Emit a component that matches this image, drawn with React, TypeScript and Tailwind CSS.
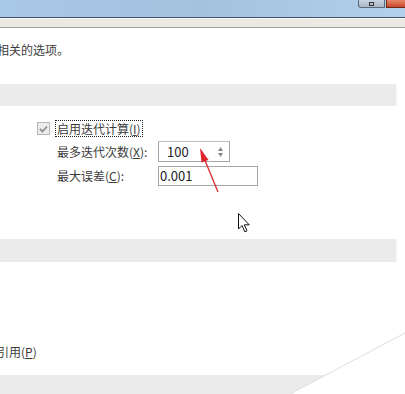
export default function App() {
  return (
    <div className="relative h-[394px] w-[405px] overflow-hidden bg-white font-['Noto_Sans_CJK_SC','Noto_Sans',sans-serif] text-[12px] leading-[16px] text-[#3b3b3b]">
      {/* window title bar */}
      <div className="flex h-[17px] items-start justify-end bg-gradient-to-r from-[#a9c8e6] via-[#a4c1de] to-[#b3cfe9]">
        <div className="flex h-[8px] w-[27px] items-end justify-center rounded-bl-[3px] border border-t-0 border-[#5b6b7d] bg-gradient-to-b from-[#c9d4df] to-[#aab6c3]">
          <div className="mb-[1px] h-[4px] w-[5px] border border-[#333]" />
        </div>
        <div className="ml-[1px] h-[8px] w-[19px] border-b border-l border-[#6b2c1c] bg-gradient-to-b from-[#e8866a] to-[#c7452a]" />
      </div>
      <div className="h-px bg-[#44556a]" />
      <div className="h-px bg-[#f4f7fa]" />
      <div className="h-[8px] bg-[#ece8e4]" />
      <div className="h-px bg-[#a3a3a3]" />

      <p className="ml-[-3px] mt-[14px]">相关的选项。</p>

      <div className="mt-[26px] h-[22px] w-[397px] border-r border-[#f7f7f7] bg-[#ebebeb]" />

      <div className="ml-[37px] mt-[14px] flex h-[17px] items-center">
        <div className="flex h-[13px] w-[13px] items-center justify-center border border-[#b5b5b5] bg-[#ececec]">
          <svg width="9" height="8" viewBox="0 0 9 8">
            <path d="M1 4 L3.5 6.5 L8 1.5" fill="none" stroke="#8e8e8e" strokeWidth="1.8" />
          </svg>
        </div>
        <span className="ml-[5px] border border-dotted border-[#222] px-[1px] leading-[15px]">
          启用迭代计算(<span className="underline">I</span>)
        </span>
      </div>

      <div className="ml-[57px] mt-[4px] flex h-[21px] items-center">
        <span className="w-[101px]">
          最多迭代次数(<span className="underline">X</span>):
        </span>
        <div className="flex h-[21px] w-[72px] items-center border border-[#a7a7a7] border-t-[#bdbdbd] pl-[8px] text-[13px] text-[#222]">
          <span className="flex-1">100</span>
          <div className="mr-[6px] flex flex-col items-center text-[#888]">
            <svg width="5" height="4" viewBox="0 0 5 4"><path d="M2.5 0 L5 4 L0 4 Z" fill="#8a8a8a" /></svg>
            <svg width="5" height="4" viewBox="0 0 5 4" className="mt-[2px]"><path d="M0 0 L5 0 L2.5 4 Z" fill="#8a8a8a" /></svg>
          </div>
        </div>
      </div>

      <div className="ml-[57px] mt-[4px] flex h-[20px] items-center">
        <span className="w-[101px]">
          最大误差(<span className="underline">C</span>):
        </span>
        <div className="flex h-[20px] w-[100px] items-center border border-[#a7a7a7] pl-[1px] text-[13px] text-[#222]">
          0.001
        </div>
      </div>

      <div className="mt-[53px] h-[23px] w-[397px] border-r border-[#f7f7f7] bg-[#ebebeb]" />

      <p className="ml-[-3px] mt-[82px]">
        引用(<span className="underline">P</span>)
      </p>

      <div className="mt-[15px] h-[19px] bg-[#ebebeb]" />

      {/* red annotation arrow */}
      <svg className="absolute left-0 top-0" width="405" height="394" viewBox="0 0 405 394">
        <line x1="218" y1="192" x2="204" y2="158" stroke="#d9262b" strokeWidth="1.3" />
        <path d="M200 148 L208.5 160 L201.5 162.5 Z" fill="#e0242b" />
      </svg>

      {/* mouse cursor */}
      <svg className="absolute left-[238px] top-[213px]" width="13" height="20" viewBox="0 0 13 20">
        <path d="M0.5 0.5 L0.5 16 L4 12.5 L6.8 18.8 L9 17.8 L6.3 11.8 L11.2 11.8 Z" fill="#fff" stroke="#111" strokeWidth="1" strokeLinejoin="round" />
      </svg>

      {/* page curl */}
      <svg className="absolute left-0 top-0" width="405" height="394" viewBox="0 0 405 394">
        <path d="M405 333 L290 394 L405 394 Z" fill="#fff" />
        <line x1="405" y1="333" x2="290" y2="394" stroke="#d6d6d6" strokeWidth="0.8" />
      </svg>
    </div>
  );
}
